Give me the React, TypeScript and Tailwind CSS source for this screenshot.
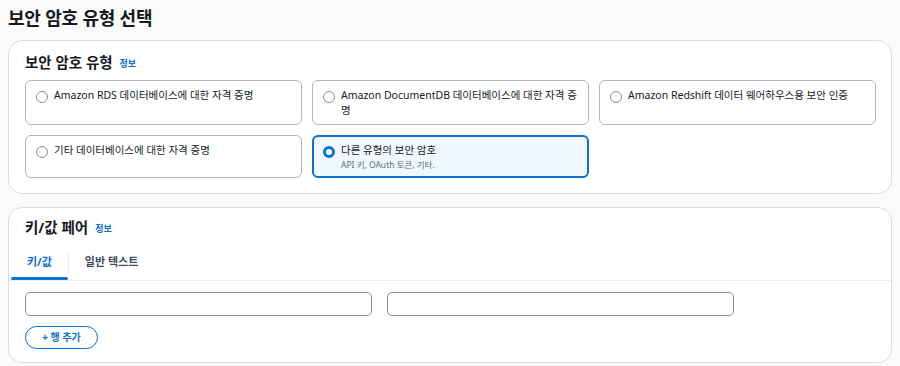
import React, { useState } from 'react';

const FONT = '"Noto Sans", "Noto Sans CJK KR", sans-serif';

interface TileOption {
  id: string;
  label: string;
  sub?: string;
}

const options: TileOption[] = [
  { id: 'rds', label: 'Amazon RDS 데이터베이스에 대한 자격 증명' },
  { id: 'docdb', label: 'Amazon DocumentDB 데이터베이스에 대한 자격 증명' },
  { id: 'redshift', label: 'Amazon Redshift 데이터 웨어하우스용 보안 인증' },
  { id: 'other-db', label: '기타 데이터베이스에 대한 자격 증명' },
  { id: 'other', label: '다른 유형의 보안 암호', sub: 'API 키, OAuth 토큰, 기타.' },
];

const Radio: React.FC<{ checked: boolean }> = ({ checked }) =>
  checked ? (
    <span className="mt-[3px] w-[12px] h-[12px] shrink-0 rounded-full border-[3.5px] border-[#0972d3] bg-white" />
  ) : (
    <span className="mt-[3px] w-[12px] h-[12px] shrink-0 rounded-full border border-[#8c8c94] bg-white" />
  );

export default function App() {
  const [selected, setSelected] = useState('other');
  const [tab, setTab] = useState<'kv' | 'text'>('kv');

  return (
    <div className="w-[900px] h-[366px] bg-[#fafafa] px-[8px] overflow-hidden" style={{ fontFamily: FONT }}>
      <h1 className="h-[36px] flex items-center text-[18px] font-bold text-[#16191f] tracking-[-0.2px]">
        보안 암호 유형 선택
      </h1>

      <div className="mt-[4px] bg-white rounded-[14px] border border-[#dcdcdf] pl-[16px] pr-[15px] pb-[15px]">
        <div className="h-[39px] flex items-center gap-[7px] pt-[4px]">
          <span className="text-[14.5px] font-bold text-[#16191f]">보안 암호 유형</span>
          <span className="text-[9px] font-bold text-[#0972d3] mt-[2px]">정보</span>
        </div>
        <div className="grid grid-cols-3 gap-x-[10px] gap-y-[10px]">
          {options.map((o) => {
            const on = o.id === selected;
            return (
              <button
                key={o.id}
                onClick={() => setSelected(o.id)}
                className={
                  on
                    ? 'flex items-start gap-[6px] text-left rounded-[6px] border-2 border-[#0972d3] bg-[#f0f7fe] pl-[9px] pr-[8px] pt-[6px] pb-[5px] min-h-[43px]'
                    : 'flex items-start gap-[6px] text-left rounded-[6px] border border-[#b4b4bb] bg-white pl-[10px] pr-[9px] pt-[7px] pb-[6px] min-h-[43px]'
                }
              >
                <Radio checked={on} />
                <span className="flex flex-col">
                  <span className="text-[10.5px] leading-[15px] text-[#16191f]">{o.label}</span>
                  {o.sub && <span className="text-[8.5px] leading-[13px] text-[#5f6b7a]">{o.sub}</span>}
                </span>
              </button>
            );
          })}
        </div>
      </div>

      <div className="mt-[13px] bg-white rounded-[14px] border border-[#dcdcdf] pb-[13px]">
        <div className="h-[37px] flex items-center gap-[7px] px-[16px] pt-[2px]">
          <span className="text-[14.5px] font-bold text-[#16191f]">키/값 페어</span>
          <span className="text-[9px] font-bold text-[#0972d3] mt-[2px]">정보</span>
        </div>

        <div className="flex items-stretch px-[2px] border-b border-[#e9ebed]">
          <button
            onClick={() => setTab('kv')}
            className={
              'relative h-[35px] px-[16px] text-[11px] font-bold ' +
              (tab === 'kv' ? 'text-[#0972d3]' : 'text-[#414d5c]')
            }
          >
            키/값
            {tab === 'kv' && (
              <span className="absolute left-0 right-0 bottom-0 h-[3px] rounded-full bg-[#0972d3]" />
            )}
          </button>
          <span className="w-px mt-[6px] mb-[7px] bg-[#e9ebed]" />
          <button
            onClick={() => setTab('text')}
            className={
              'relative h-[35px] px-[16px] text-[11px] font-bold ' +
              (tab === 'text' ? 'text-[#0972d3]' : 'text-[#414d5c]')
            }
          >
            일반 텍스트
            {tab === 'text' && (
              <span className="absolute left-0 right-0 bottom-0 h-[3px] rounded-full bg-[#0972d3]" />
            )}
          </button>
        </div>

        <div className="px-[16px] pt-[11px]">
          <div className="flex gap-[15px]">
            <input className="w-[347px] h-[24px] rounded-[5px] border border-[#8c8c94] bg-white px-2 text-[11px] outline-none" />
            <input className="w-[347px] h-[24px] rounded-[5px] border border-[#8c8c94] bg-white px-2 text-[11px] outline-none" />
          </div>
          <button className="mt-[10px] h-[23px] w-[73px] rounded-full border border-[#0972d3] text-[10px] font-bold text-[#0972d3] flex items-center justify-center">
            + 행 추가
          </button>
        </div>
      </div>
    </div>
  );
}
